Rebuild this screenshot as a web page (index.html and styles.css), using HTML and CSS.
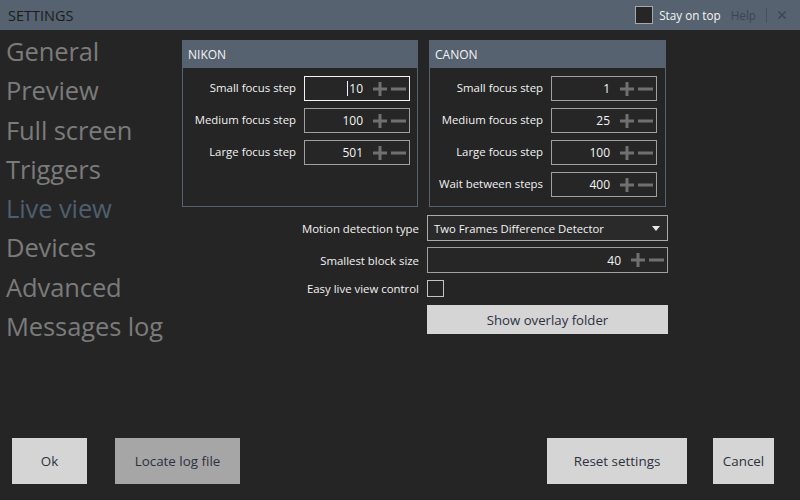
FILE: index.html
```html
<!DOCTYPE html>
<html>
<head>
<meta charset="utf-8">
<title>Settings</title>
<link rel="stylesheet" href="styles.css">
</head>
<body>
<div class="app">
  <header class="titlebar">
    <div class="title">SETTINGS</div>
    <div class="title-right">
      <span class="top-check"></span>
      <span class="stay">Stay on top</span>
      <span class="help">Help</span>
      <span class="sep"></span>
      <svg class="close" width="8" height="8" viewBox="0 0 8 8"><path d="M0.5 0.5 L7.5 7.5 M7.5 0.5 L0.5 7.5" stroke="#3b4550" stroke-width="1.4" fill="none"/></svg>
    </div>
  </header>
  <div class="main">
    <nav class="sidebar">
      <div class="nav-item">General</div>
      <div class="nav-item">Preview</div>
      <div class="nav-item">Full screen</div>
      <div class="nav-item">Triggers</div>
      <div class="nav-item active">Live view</div>
      <div class="nav-item">Devices</div>
      <div class="nav-item">Advanced</div>
      <div class="nav-item">Messages log</div>
    </nav>
    <section class="content">
      <div class="panels">
        <div class="panel nikon">
          <div class="panel-head">NIKON</div>
          <div class="panel-body">
            <label class="lbl">Small focus step</label>
            <div class="num focused"><span class="caret"></span><span class="val">10</span><svg class="plus" width="14" height="14" viewBox="0 0 14 14"><path d="M0 7 H14 M7 0 V14" stroke="#707070" stroke-width="3"/></svg><svg class="minus" width="15" height="14" viewBox="0 0 15 14"><path d="M0 7 H15" stroke="#707070" stroke-width="3"/></svg></div>
            <label class="lbl">Medium focus step</label>
            <div class="num"><span class="val">100</span><svg class="plus" width="14" height="14" viewBox="0 0 14 14"><path d="M0 7 H14 M7 0 V14" stroke="#707070" stroke-width="3"/></svg><svg class="minus" width="15" height="14" viewBox="0 0 15 14"><path d="M0 7 H15" stroke="#707070" stroke-width="3"/></svg></div>
            <label class="lbl">Large focus step</label>
            <div class="num"><span class="val">501</span><svg class="plus" width="14" height="14" viewBox="0 0 14 14"><path d="M0 7 H14 M7 0 V14" stroke="#707070" stroke-width="3"/></svg><svg class="minus" width="15" height="14" viewBox="0 0 15 14"><path d="M0 7 H15" stroke="#707070" stroke-width="3"/></svg></div>
          </div>
        </div>
        <div class="panel canon">
          <div class="panel-head">CANON</div>
          <div class="panel-body">
            <label class="lbl">Small focus step</label>
            <div class="num"><span class="val">1</span><svg class="plus" width="14" height="14" viewBox="0 0 14 14"><path d="M0 7 H14 M7 0 V14" stroke="#707070" stroke-width="3"/></svg><svg class="minus" width="15" height="14" viewBox="0 0 15 14"><path d="M0 7 H15" stroke="#707070" stroke-width="3"/></svg></div>
            <label class="lbl">Medium focus step</label>
            <div class="num"><span class="val">25</span><svg class="plus" width="14" height="14" viewBox="0 0 14 14"><path d="M0 7 H14 M7 0 V14" stroke="#707070" stroke-width="3"/></svg><svg class="minus" width="15" height="14" viewBox="0 0 15 14"><path d="M0 7 H15" stroke="#707070" stroke-width="3"/></svg></div>
            <label class="lbl">Large focus step</label>
            <div class="num"><span class="val">100</span><svg class="plus" width="14" height="14" viewBox="0 0 14 14"><path d="M0 7 H14 M7 0 V14" stroke="#707070" stroke-width="3"/></svg><svg class="minus" width="15" height="14" viewBox="0 0 15 14"><path d="M0 7 H15" stroke="#707070" stroke-width="3"/></svg></div>
            <label class="lbl">Wait between steps</label>
            <div class="num"><span class="val">400</span><svg class="plus" width="14" height="14" viewBox="0 0 14 14"><path d="M0 7 H14 M7 0 V14" stroke="#707070" stroke-width="3"/></svg><svg class="minus" width="15" height="14" viewBox="0 0 15 14"><path d="M0 7 H15" stroke="#707070" stroke-width="3"/></svg></div>
          </div>
        </div>
      </div>
      <div class="form">
        <label class="lbl">Motion detection type</label>
        <div class="combo"><span>Two Frames Difference Detector</span><svg width="8" height="5" viewBox="0 0 8 5"><path d="M0 0 H8 L4 5 Z" fill="#e8e8e8"/></svg></div>
        <label class="lbl">Smallest block size</label>
        <div class="num wide"><span class="val">40</span><svg class="plus" width="14" height="14" viewBox="0 0 14 14"><path d="M0 7 H14 M7 0 V14" stroke="#707070" stroke-width="3"/></svg><svg class="minus" width="15" height="14" viewBox="0 0 15 14"><path d="M0 7 H15" stroke="#707070" stroke-width="3"/></svg></div>
        <label class="lbl">Easy live view control</label>
        <div class="checkbox-cell"><span class="checkbox"></span></div>
        <div></div>
        <button class="btn overlay">Show overlay folder</button>
      </div>
    </section>
  </div>
  <footer class="footer">
    <div class="group">
      <button class="btn big ok">Ok</button>
      <button class="btn big locate">Locate log file</button>
    </div>
    <div class="group right">
      <button class="btn big reset">Reset settings</button>
      <button class="btn big cancel">Cancel</button>
    </div>
  </footer>
</div>
</body>
</html>
```

FILE: styles.css
```css
* { box-sizing: border-box; }
html, body { margin: 0; padding: 0; }
body {
  width: 800px;
  height: 500px;
  background: #252525;
  font-family: "Open Sans", "Noto Sans", sans-serif;
  color: #f2f2f2;
  overflow: hidden;
}
.app { display: flex; flex-direction: column; height: 500px; }

.titlebar {
  height: 30px;
  background: #56626f;
  display: flex;
  align-items: center;
  justify-content: space-between;
  padding: 0 0 0 8px;
}
.title { font-size: 14.5px; color: #1c1c1c; }
.title-right { display: flex; align-items: center; height: 30px; padding-right: 14px; }
.top-check {
  width: 18px; height: 18px;
  background: #262626;
  border: 1px solid #a8a8a8;
  margin-right: 6px;
}
.stay { font-size: 11.7px; color: #f4f4f4; margin-right: 10px; }
.help { font-size: 11.7px; color: #3c4652; margin-right: 10px; }
.sep { width: 1px; height: 15px; background: #47515c; margin-right: 11px; }
.close { display: block; }

.main { flex: 1; display: flex; }
.sidebar { width: 182px; padding-top: 2px; padding-left: 6px; }
.nav-item {
  font-size: 25.5px;
  line-height: 39.3px;
  color: #7b7b7b;
  white-space: nowrap;
  letter-spacing: -0.1px;
}
.nav-item.active { color: #4e5f70; }

.content { padding-top: 10px; }
.panels { display: flex; gap: 11px; align-items: stretch; }
.panel { border: 1px solid #56626f; display: flex; flex-direction: column; }
.panel.nikon { width: 236px; }
.panel.canon { width: 237px; }
.panel-head {
  height: 27px;
  background: #56626f;
  font-size: 12px;
  color: #f4f4f4;
  display: flex;
  align-items: center;
  padding-left: 5px;
}
.panel-body {
  display: grid;
  grid-template-columns: 1fr 106px;
  grid-auto-rows: 25px;
  column-gap: 8px;
  row-gap: 7px;
  padding: 8px 8px 9px 3px;
}
.nikon .panel-body { padding-right: 7px; }
.lbl {
  font-size: 11.4px;
  color: #f2f2f2;
  text-align: right;
  white-space: nowrap;
  align-self: center;
  margin-top: -2px;
}

.num {
  border: 1px solid #a0a0a0;
  background: #262626;
  display: flex;
  align-items: center;
  justify-content: flex-end;
  padding-right: 3px;
}
.num.focused { border-color: #f4f4f4; }
.caret { width: 1px; height: 15px; background: #f4f4f4; margin-right: 1px; }
.val { font-size: 12px; color: #f4f4f4; margin-right: 10px; }
.plus { display: block; margin-right: 4px; }
.minus { display: block; }

.form {
  display: grid;
  grid-template-columns: 237px 241px;
  grid-template-rows: 26px 26px 18px 31px;
  column-gap: 8px;
  row-gap: 6px;
  margin-top: 8px;
}
.form .lbl { margin-top: 0; }
.combo {
  border: 1px solid #ababab;
  background: #2a2a2a;
  display: flex;
  align-items: center;
  justify-content: space-between;
  padding: 0 7px 0 6px;
  font-size: 11.3px;
  color: #f4f4f4;
}
.combo svg { display: block; }
.checkbox-cell { display: flex; align-items: flex-end; }
.checkbox { width: 17px; height: 17px; border: 1px solid #c4c4c4; }

.btn {
  border: none;
  font-family: "Open Sans", "Noto Sans", sans-serif;
  background: #d5d5d5;
  color: #2c3140;
  font-size: 13.4px;
  padding: 0;
}
.overlay { height: 29px; margin-top: 2px; font-size: 13.2px; }

.footer {
  display: flex;
  justify-content: space-between;
  padding: 0 26px 16px 12px;
}
.group { display: flex; gap: 28px; }
.group.right { gap: 26px; }
.big { height: 46px; }
.ok { width: 75px; }
.locate { width: 125px; background: #a6a6a6; }
.reset { width: 140px; }
.cancel { width: 61px; }
```
